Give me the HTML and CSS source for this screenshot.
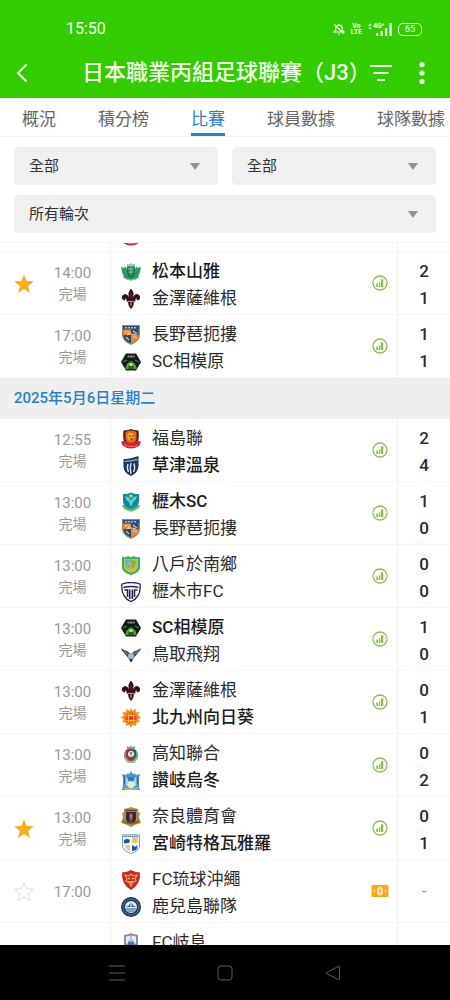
FILE: index.html
```html
<!DOCTYPE html>
<html lang="zh-Hant">
<head>
<meta charset="utf-8">
<meta name="viewport" content="width=device-width, initial-scale=1">
<title>日本職業丙組足球聯賽（J3）</title>
<link rel="stylesheet" href="styles.css">
</head>
<body>
<svg class="sprite" aria-hidden="true">
  <symbol id="star" viewBox="0 0 22 22"><path d="M11 1.2l2.6 6.7 7.1.4-5.5 4.6 1.8 7L11 16l-6 3.9 1.8-7L1.3 8.3l7.1-.4z"/></symbol>
  <symbol id="stats" viewBox="0 0 16 16">
    <circle cx="8" cy="8" r="7" fill="none" stroke="#8dc153" stroke-width="1.3"/>
    <path d="M4.300 8.500h1.900V12H4.300zM7 7.300h1.300V12H7zM9 4.200h2.300V12H9z" fill="#84c341"/>
  </symbol>
  <symbol id="ticket" viewBox="0 0 18 14">
    <path d="M.5 1h17v12H.5z" fill="#f5ab1c"/>
    <path d="M5.8 2.5v9M12.200 2.500v9" stroke="#e79a10" stroke-width=".8"/>
    <ellipse cx="9" cy="7" rx="3" ry="4.500" fill="#fff1cf"/>
    <path d="M9 3v8M7 7h4" stroke="#f5ab1c" stroke-width="1"/>
    <path d="M2 7l1.500-1.500V8.500zM16 7l-1.500-1.500V8.500z" fill="#fff1cf"/>
  </symbol>

  <symbol id="matsumoto" viewBox="0 0 20 20">
    <path d="M0 5l3.500 1L4 4l2 3 1 5h6l1-5 2-3 .5 2L20 5l-1 5-1 3-1 1 1 1-3 2-2 .5-3 1-3-1L5 17l-3-2 1-1-1-1-1-3z" fill="#2d9a63"/>
    <path d="M6 4h8v8q-1 3-4 4-3-1-4-4z" fill="#157b4b"/>
    <path d="M6 1.500l2 1 2-1.500 2 1.500 2-1v3H6z" fill="#9dbfae"/>
    <path d="M7 7h6M10 5v8M7.500 10h5" stroke="#8fcbab" stroke-width="1"/>
    <path d="M5 17q5 2 10 0" stroke="#99b8a5" fill="none"/>
  </symbol>
  <symbol id="kanazawa" viewBox="0 0 20 20">
    <path d="M10 0q3.200 3.500 1.800 8l.4 2q.3-4.300 3.800-4.500 3.200.5 2.800 3.500-.5 2.400-2.800 2 .8-1.700-.6-2-1.500.7-1.600 3.300l-1.300 1.200q0 3.500-2.500 6-2.500-2.500-2.500-6l-1.300-1.200Q6.100 9.700 4.600 9q-1.400.3-.6 2-2.300.4-2.800-2Q.8 6 4 5.500q3.500.2 3.800 4.500l.4-2Q6.800 3.500 10 0z" fill="#321018" stroke="#321018" stroke-width=".8"/>
    <path d="M6.500 12.300h7M10 13v4" stroke="#c08835" stroke-width="1.300"/>
    <path d="M10 3v6" stroke="#7a1f2a" stroke-width="1"/>
  </symbol>
  <symbol id="nagano" viewBox="0 0 20 20">
    <path d="M1 0h18v10q0 6-9 10-9-4-9-10z" fill="#a5825f"/>
    <path d="M2.500 4H10v6H2.500z" fill="#e9893c"/><path d="M10 4h7.500v6H10z" fill="#23518a"/>
    <path d="M2.500 10H10v8.500q-7-3-7.500-8.500z" fill="#1c4678"/><path d="M10 10h7.500q-.5 5.500-7.500 8.500z" fill="#ef8435"/>
    <path d="M2 1h16v3.500H2z" fill="#2d527e"/><path d="M4 2.800h12" stroke="#f1ead5" stroke-width="1" stroke-dasharray="2 1"/>
    <path d="M3.500 8q3-3 5 0l-2 1.500M12 6l4 3M5 12l3 3M12 12q3 0 4 1M6 10q4-2 9 0" fill="none" stroke="#f4c98a" stroke-width="1.100"/>
  </symbol>
  <symbol id="sagamihara" viewBox="0 0 20 20">
    <path d="M5 1.500h10l5 8.500-5 8.500H5L0 10z" fill="#101a12"/>
    <path d="M5.500 13L9 9h2l3.500 4 1 4h-11z" fill="#53b332"/><path d="M8.500 9.500h3L13 18H7z" fill="#16301a"/>
    <circle cx="10" cy="12.500" r="2" fill="#b7e375"/>
    <path d="M6.500 4.500h7" stroke="#87918a" stroke-width="1.800" stroke-dasharray="2 .5"/>
    <path d="M2 10l4-2M18 10l-4-2M4 16h12" stroke="#3d8a30" stroke-width="1.200"/>
  </symbol>
  <symbol id="fukushima" viewBox="0 0 20 20">
    <path d="M2.500 1.500L7 1l3-1 3 1 4.500.5q1 7.500-1 12.500H3.500q-2-5-1-12.500z" fill="#551a16"/>
    <path d="M4.500 3q5.500-3 11 0v7q-1 4-5.500 5-4.500-1-5.500-5z" fill="#e36a1d"/>
    <path d="M6.500 5q3-3 6 0l1 3-2 3-3 .5-2.500-3z" fill="#f4a72a"/><path d="M8 7h1.500M11 7h1.500M9 10h3" stroke="#56160d" stroke-width="1.200"/>
    <path d="M0 12.500l4-.5q6 4 12 0l4 .5-1.500 4Q10 22.500 1.500 16.500z" fill="#d51f32"/>
    <path d="M3.500 15.500q6.500 4 13 0" fill="none" stroke="#f6b9b0" stroke-width="1.100" stroke-dasharray="1 .7"/>
  </symbol>
  <symbol id="kusatsu" viewBox="0 0 20 20">
    <path d="M2.500 3Q8 3.500 17.500 0v10q-.5 7-7.500 10-7-3-7.500-9z" fill="#163663"/>
    <path d="M3.500 5.300q7-.300 13-1.800" stroke="#8ca2c2" fill="none" stroke-width="1.300"/>
    <path d="M7 8q-1.500 4 .5 8M10 7q-1.500 5 0 11M13 7.500q1.500 4-.5 8.500" stroke="#dce6ef" fill="none" stroke-width="1.400"/>
  </symbol>
  <symbol id="tochigi-sc" viewBox="0 0 20 20">
    <path d="M2 2q4 .5 8-1.500Q14 2.500 18 2v8q-1 6-8 8-7-2-8-8z" fill="#1684a5"/>
    <path d="M4 4q5 1 6 5 1-4 6-5-1 4-4 6l-2 5-2-5Q5 8 4 4z" fill="#62d2c6"/><circle cx="10" cy="4" r="1.800" fill="#a4dc6b"/>
    <path d="M2 13q1 4 8 5.500 7-1.500 8-5.500" fill="none" stroke="#65bd68" stroke-width="2.400"/>
  </symbol>
  <symbol id="hachinohe" viewBox="0 0 20 20">
    <path d="M1 2q4 1 6-1 3 2 6 0 2 2 6 1v11q-1 5-9 7-8-2-9-7z" fill="#38ad5c"/>
    <path d="M3 3.500q6 1 14 0V12q-1 4.500-7 6-6-1.500-7-6z" fill="#b9c640"/>
    <path d="M4 5h5l-2 4 3 1-3 4q-3-2-3-9z" fill="#53b9d1"/><path d="M10 5l5 1-1 5-3 2-1-4z" fill="#52b3a0"/>
    <path d="M8 7q3-2 4 1t-2 5l4-1" fill="none" stroke="#ee8a37" stroke-width="1.400"/>
  </symbol>
  <symbol id="tochigi-city" viewBox="0 0 20 20">
    <path d="M1 2q9-3 18 0 1.500 13-9 17.500Q-.5 15 1 2z" fill="#fff" stroke="#20265a" stroke-width="1.300"/>
    <path d="M2.500 5.500q7.500-2 15 0" fill="none" stroke="#20265a" stroke-width="1.600"/>
    <path d="M3.500 8h3v7M8.700 7.500V17M11.300 17V7.500M16.500 8h-3v7" fill="none" stroke="#20265a" stroke-width="1.600"/>
  </symbol>
  <symbol id="tottori" viewBox="0 0 20 20">
    <path d="M0 3q4 3 7 3.500L10 9l3-2.500Q16 6 20 3q-1 4-3.500 5.500L13.500 12 10 17l-3.500-5-3-3.500Q1 7 0 3z" fill="#344754"/>
    <path d="M2 6l5.500 3M18 6l-5.500 3" stroke="#7794a3" stroke-width="1"/>
    <circle cx="10" cy="11" r="3" fill="#a6bbc5"/><path d="M8 14.500l2 3 2-3" fill="#25343d"/>
  </symbol>
  <symbol id="kitakyushu" viewBox="0 0 20 20">
    <path d="M10 0l1.500 3L14.500.800l.5 3.400 3.500-.2-1.300 3.300L20 9.500l-2.600 1.700 1.600 3-3.500.3-.5 3.500-3.200-1.300L10 20l-1.800-3.300L5 18l-.5-3.500L1 14.200l1.600-3L0 9.500l2.800-2.200L1.500 4l3.500.2.500-3.400L8.500 3z" fill="#f5941d"/>
    <circle cx="10" cy="10" r="5.800" fill="#e8502a"/>
    <path d="M5.500 7.500h9M5.500 12.500h9M7.500 5.500v9M12.500 5.500v9M10 5v10" stroke="#ffc52c" stroke-width=".9"/><circle cx="10" cy="10" r="1.600" fill="#d92b24"/>
  </symbol>
  <symbol id="kochi" viewBox="0 0 20 20">
    <path d="M6 2l3 1 1-2.500L11 3l3-1v3H6z" fill="#9aa57f"/><circle cx="10" cy="11" r="7.200" fill="#8a8c7e"/>
    <path d="M5 6l5-1v12q-5-2-5-6z" fill="#b5293c"/><path d="M10 5l5 1v5q0 4-5 6z" fill="#1e7052"/>
    <circle cx="10" cy="10" r="3" fill="#edf0e8"/><path d="M8.500 9h3M10 8v4" stroke="#566b61"/>
    <path d="M4 14l3 4h6l3-4" fill="none" stroke="#b8ad85" stroke-width="2"/>
  </symbol>
  <symbol id="sanuki" viewBox="0 0 20 20">
    <path d="M1 3l4 1 2-2 1 1.500L10 0l2 3.500L13 2l2 2 4-1-1 4v8l1 4H1l1-4V7z" fill="#4795c9"/>
    <path d="M4.500 6h11v8L10 18l-5.500-4z" fill="#a5d4e8"/><path d="M6 6h8l-2 5H8z" fill="#3379ae"/>
    <circle cx="10" cy="13.500" r="3.500" fill="#e5e8cf"/><path d="M3 17q7 3 14 0" stroke="#c5ba7b" stroke-width="1.700" fill="none"/>
    <path d="M3.500 6v7M16.500 6v7" stroke="#256ba3" stroke-width="1.200"/>
  </symbol>
  <symbol id="nara" viewBox="0 0 20 20">
    <path d="M3 2l4-1 3-1 3 1 4 1v3l2 1-1 4 2 6-5 1.500L10 20l-5-2.500L0 16l2-6-1-4 2-1z" fill="#b18a43"/>
    <path d="M5 5h10v7q-1 4-5 5-4-1-5-5z" fill="#34264e"/><path d="M8.500 6h3v8l-1.500 1-1.500-1z" fill="#8c3f40"/>
    <path d="M4.500 3.500h11" stroke="#654425" stroke-width="1.400"/><path d="M2 14q8 5 16 0" stroke="#80602d" stroke-width="1.500" fill="none"/>
    <path d="M10 7v5M8.500 9h3" stroke="#d0a85f" stroke-width=".8"/>
  </symbol>
  <symbol id="miyazaki" viewBox="0 0 20 20">
    <path d="M1.500.800h17v12Q17 17.500 10 19.500 3 17.500 1.500 12.800z" fill="#eef2f4" stroke="#87a0bf"/>
    <path d="M10.500 3H17v6h-6.500z" fill="#f4cf68"/><path d="M3 6q3-2 6 0l-1 3-5 1z" fill="#20539a"/>
    <path d="M11 11l3 2 2.500-2-1 5-4.500 1z" fill="#215695"/><path d="M4 11h5v6q-4-2-5-6z" fill="#f2c490"/>
    <path d="M2.500 2.300h15" stroke="#497cb8" stroke-width="1.300" stroke-dasharray="1.500 .6"/>
    <path d="M10 3v15M2 10h16" stroke="#fff" stroke-width="1"/><circle cx="13.500" cy="6" r="1.500" fill="#f0b556"/>
  </symbol>
  <symbol id="ryukyu" viewBox="0 0 20 20">
    <path d="M1 2.500Q6 2 10 0q4 2 9 2.500Q20 14 10 20 0 14 1 2.500z" fill="#c92c27"/>
    <path d="M4 5l4 1 2-2 2 2 4-1-2 4 1 2-3 1-2 4-2-4-3-1 1-2z" fill="none" stroke="#f6aa5b" stroke-width="1.100"/>
    <path d="M7 8l2 1M13 8l-2 1M8 12h4" stroke="#f6c07c" stroke-width="1.300"/>
  </symbol>
  <symbol id="kagoshima" viewBox="0 0 20 20">
    <circle cx="10" cy="10" r="10" fill="#17385c"/><circle cx="10" cy="10" r="7.800" fill="none" stroke="#6f8aa6" stroke-width="1.200" stroke-dasharray="1.200 .8"/>
    <circle cx="10" cy="10" r="6" fill="#dce7ef"/><path d="M4.500 10l3-1 2.500-4 2.500 4 3 1z" fill="#315f8e"/>
    <path d="M4.500 12h11M6 14h8" stroke="#315f8e" stroke-width="1.200"/><path d="M10 5v5" stroke="#fff"/>
  </symbol>
  <symbol id="gifu" viewBox="0 0 20 20">
    <path d="M3 2l5-1 2-1 2 1 5 1v12l-7 5-7-5z" fill="#8290a4"/><path d="M5 3.500l4.500-1v8H5zM10.500 2.500l4.500 1v7h-4.500z" fill="#eee9e8"/>
    <path d="M7 9q3-4 6 0v6H7z" fill="#4774ad"/><circle cx="10" cy="7" r="2" fill="#b1c9e0"/>
    <path d="M0 14l5 1q5 4 10 0l5-1-2 4H2z" fill="#688c7d"/>
  </symbol>
</svg>

<div class="screen">
  <header class="header">
    <div class="status">
      <time class="status-time">15:50</time>
      <div class="status-icons">
        <svg class="bell" viewBox="0 0 12 12" aria-label="靜音"><path d="M1 9h10L9.300 7.500V5Q9 2.500 6 2.200 3 2.500 2.700 5v2.500zM5 11h2M6 1v1M1.500 1.500l9 9" fill="none" stroke="currentColor" stroke-width="1.200"/></svg>
        <span class="volte"><span>Vo</span><span>LTE</span></span>
        <span class="signal"><svg class="arrows" viewBox="0 0 4 8" aria-hidden="true"><path d="M0 3l2-2.500L4 3zM0 5l2 2.500L4 5z" fill="currentColor"/></svg><span class="net">4G⁺</span>
          <svg class="bars" viewBox="0 0 16 13" aria-hidden="true"><path d="M0 10h2.200v3H0zM4.500 8h2.200v5H4.500zM9 5h2.200v8H9zM13.500 0h2.200v13h-2.200z" fill="currentColor"/></svg></span>
        <span class="battery">65</span>
      </div>
    </div>
    <div class="bar">
      <button class="icon-button back" aria-label="返回"><svg viewBox="0 0 12 20"><path d="M10.500 1.500L2 10l8.500 8.500" fill="none" stroke="currentColor" stroke-width="2"/></svg></button>
      <h1 class="title">日本職業丙組足球聯賽（J3）</h1>
      <button class="icon-button filter" aria-label="篩選"><svg viewBox="0 0 22 18"><path d="M0 2h22M3.500 9h15M7 16h8" stroke="currentColor" stroke-width="2"/></svg></button>
      <button class="icon-button more" aria-label="更多"><svg viewBox="0 0 6 24"><circle cx="3" cy="3.500" r="2.600"/><circle cx="3" cy="12" r="2.600"/><circle cx="3" cy="20.500" r="2.600"/></svg></button>
    </div>
  </header>

  <nav class="tabs" aria-label="聯賽">
    <a class="tab" href="#overview">概況</a>
    <a class="tab" href="#table">積分榜</a>
    <a class="tab active" href="#matches" aria-current="page">比賽</a>
    <a class="tab" href="#players">球員數據</a>
    <a class="tab" href="#teams">球隊數據</a>
  </nav>

  <form class="filters">
    <div class="field"><select aria-label="階段"><option>全部</option></select></div>
    <div class="field"><select aria-label="球隊"><option>全部</option></select></div>
    <div class="field wide"><select aria-label="輪次"><option>所有輪次</option></select></div>
  </form>

  <main class="list" id="matches">
    <div class="match scrolled">
      <div class="when"></div>
      <div class="teams"><div class="team"></div><div class="team"><svg class="badge"><use href="#fukushima"/></svg></div></div>
      <div class="info"></div><div class="scores"></div>
    </div>
    <article class="match">
      <div class="when"><button class="star on" aria-label="取消收藏"><svg><use href="#star"/></svg></button><div class="time"><time>14:00</time><span>完場</span></div></div>
      <div class="teams"><div class="team win"><svg class="badge"><use href="#matsumoto"/></svg><span>松本山雅</span></div><div class="team"><svg class="badge"><use href="#kanazawa"/></svg><span>金澤薩維根</span></div></div>
      <div class="info"><svg class="stats"><use href="#stats"/></svg></div><div class="scores"><span>2</span><span>1</span></div>
    </article>
    <article class="match">
      <div class="when"><div class="time"><time>17:00</time><span>完場</span></div></div>
      <div class="teams"><div class="team"><svg class="badge"><use href="#nagano"/></svg><span>長野琶扼摟</span></div><div class="team"><svg class="badge"><use href="#sagamihara"/></svg><span>SC相模原</span></div></div>
      <div class="info"><svg class="stats"><use href="#stats"/></svg></div><div class="scores"><span>1</span><span>1</span></div>
    </article>
    <h2 class="date">2025年5月6日星期二</h2>
    <article class="match">
      <div class="when"><div class="time"><time>12:55</time><span>完場</span></div></div>
      <div class="teams"><div class="team"><svg class="badge"><use href="#fukushima"/></svg><span>福島聯</span></div><div class="team win"><svg class="badge"><use href="#kusatsu"/></svg><span>草津溫泉</span></div></div>
      <div class="info"><svg class="stats"><use href="#stats"/></svg></div><div class="scores"><span>2</span><span>4</span></div>
    </article>
    <article class="match">
      <div class="when"><div class="time"><time>13:00</time><span>完場</span></div></div>
      <div class="teams"><div class="team win"><svg class="badge"><use href="#tochigi-sc"/></svg><span>櫪木SC</span></div><div class="team"><svg class="badge"><use href="#nagano"/></svg><span>長野琶扼摟</span></div></div>
      <div class="info"><svg class="stats"><use href="#stats"/></svg></div><div class="scores"><span>1</span><span>0</span></div>
    </article>
    <article class="match">
      <div class="when"><div class="time"><time>13:00</time><span>完場</span></div></div>
      <div class="teams"><div class="team"><svg class="badge"><use href="#hachinohe"/></svg><span>八戶於南鄉</span></div><div class="team"><svg class="badge"><use href="#tochigi-city"/></svg><span>櫪木市FC</span></div></div>
      <div class="info"><svg class="stats"><use href="#stats"/></svg></div><div class="scores"><span>0</span><span>0</span></div>
    </article>
    <article class="match">
      <div class="when"><div class="time"><time>13:00</time><span>完場</span></div></div>
      <div class="teams"><div class="team win"><svg class="badge"><use href="#sagamihara"/></svg><span>SC相模原</span></div><div class="team"><svg class="badge"><use href="#tottori"/></svg><span>鳥取飛翔</span></div></div>
      <div class="info"><svg class="stats"><use href="#stats"/></svg></div><div class="scores"><span>1</span><span>0</span></div>
    </article>
    <article class="match">
      <div class="when"><div class="time"><time>13:00</time><span>完場</span></div></div>
      <div class="teams"><div class="team"><svg class="badge"><use href="#kanazawa"/></svg><span>金澤薩維根</span></div><div class="team win"><svg class="badge"><use href="#kitakyushu"/></svg><span>北九州向日葵</span></div></div>
      <div class="info"><svg class="stats"><use href="#stats"/></svg></div><div class="scores"><span>0</span><span>1</span></div>
    </article>
    <article class="match">
      <div class="when"><div class="time"><time>13:00</time><span>完場</span></div></div>
      <div class="teams"><div class="team"><svg class="badge"><use href="#kochi"/></svg><span>高知聯合</span></div><div class="team win"><svg class="badge"><use href="#sanuki"/></svg><span>讚岐烏冬</span></div></div>
      <div class="info"><svg class="stats"><use href="#stats"/></svg></div><div class="scores"><span>0</span><span>2</span></div>
    </article>
    <article class="match">
      <div class="when"><button class="star on" aria-label="取消收藏"><svg><use href="#star"/></svg></button><div class="time"><time>13:00</time><span>完場</span></div></div>
      <div class="teams"><div class="team"><svg class="badge"><use href="#nara"/></svg><span>奈良體育會</span></div><div class="team win"><svg class="badge"><use href="#miyazaki"/></svg><span>宮崎特格瓦雅羅</span></div></div>
      <div class="info"><svg class="stats"><use href="#stats"/></svg></div><div class="scores"><span>0</span><span>1</span></div>
    </article>
    <article class="match">
      <div class="when"><button class="star" aria-label="收藏"><svg><use href="#star"/></svg></button><div class="time"><time>17:00</time></div></div>
      <div class="teams"><div class="team"><svg class="badge"><use href="#ryukyu"/></svg><span>FC琉球沖繩</span></div><div class="team"><svg class="badge"><use href="#kagoshima"/></svg><span>鹿兒島聯隊</span></div></div>
      <div class="info"><svg class="ticket"><use href="#ticket"/></svg></div><div class="scores pending"><span>-</span></div>
    </article>
    <article class="match">
      <div class="when"><button class="star" aria-label="收藏"><svg><use href="#star"/></svg></button></div>
      <div class="teams"><div class="team"><svg class="badge"><use href="#gifu"/></svg><span>FC岐阜</span></div></div>
      <div class="info"></div><div class="scores"></div>
    </article>
  </main>

  <footer class="system">
    <button aria-label="最近"><svg viewBox="0 0 16 16"><path d="M0 1h16M0 8h16M0 15h16"/></svg></button>
    <button aria-label="主頁"><svg viewBox="0 0 16 16"><rect x="1" y="1" width="14" height="14" rx="3"/></svg></button>
    <button aria-label="返回"><svg viewBox="0 0 16 16"><path d="M14.500 2v12q0 1-1 .6L1.800 8.700q-1-.7 0-1.400L13.500 1.400q1-.4 1 .6z"/></svg></button>
  </footer>
</div>
</body>
</html>
```
FILE: styles.css
```css
* { box-sizing: border-box; }
body {
  margin: 0;
  background: #fff;
  color: #2b2b2b;
  font-family: Roboto, "Noto Sans CJK TC", sans-serif;
}
button {
  display: grid;
  place-items: center;
  padding: 0;
  border: 0;
  background: none;
  color: inherit;
}
svg { display: block; }
.sprite { display: none; }

.screen {
  display: flex;
  flex-direction: column;
  height: 100vh;
  overflow: hidden;
}

/* Header */
.header {
  flex: none;
  padding-top: 18px;
  background: #33cc00;
  color: #f0ffea;
}
.status {
  display: flex;
  justify-content: space-between;
  align-items: center;
  height: 22px;
  padding: 0 28px 0 66px;
}
.status-time { font-size: 16px; line-height: 22px; }
.status-icons { display: flex; align-items: center; gap: 6px; }
.bell { width: 12px; height: 12px; }
.volte {
  display: grid;
  justify-items: center;
  font-size: 7px;
  font-weight: 700;
  line-height: 6px;
}
.signal { display: grid; grid-template-columns: 4px 20px; align-items: start; }
.arrows { width: 4px; height: 7px; }
.net { font-size: 7px; font-weight: 700; line-height: 7px; grid-area: 1 / 2; padding-left: 1px; }
.bars { width: 16px; height: 13px; grid-area: 1 / 2; justify-self: end; }
.battery {
  width: 24px;
  height: 13px;
  border: 1px solid currentColor;
  border-radius: 5px;
  font-size: 9px;
  line-height: 11px;
  text-align: center;
}
.bar {
  display: flex;
  align-items: center;
  height: 50px;
  margin-top: 8px;
  padding: 0 17px 0 15px;
}
.icon-button { flex: none; height: 40px; }
.back { width: 14px; }
.back svg { width: 12px; height: 20px; }
.filter { width: 24px; }
.filter svg { width: 22px; height: 18px; }
.more { width: 22px; margin-left: 18px; }
.more svg { width: 6px; height: 24px; fill: currentColor; }
.title {
  flex: 1;
  min-width: 0;
  margin: 0;
  padding-left: 53px;
  font-size: 22px;
  font-weight: 500;
  line-height: 32px;
  white-space: nowrap;
}

/* Tabs */
.tabs {
  display: flex;
  flex: none;
  gap: 42px;
  height: 39px;
  padding-left: 22px;
  border-bottom: 1px solid #f3f3f3;
  overflow: hidden;
}
.tab {
  flex: none;
  border-bottom: 3px solid transparent;
  color: #666;
  font-size: 17px;
  line-height: 42px;
  text-decoration: none;
  white-space: nowrap;
}
.tab.active { border-color: #2a80c8; color: #2a80c8; }

/* Filters */
.filters {
  display: grid;
  flex: none;
  grid-template-columns: 1fr 1fr;
  gap: 10px 14px;
  padding: 10px 14px 9px;
}
.field { display: grid; align-items: center; }
.field.wide { grid-column: 1 / -1; }
.field select {
  grid-area: 1 / 1;
  width: 100%;
  height: 38px;
  padding: 0 36px 0 15px;
  border: 0;
  border-radius: 5px;
  background: #f0f0f0;
  color: #333;
  font: 15px Roboto, "Noto Sans CJK TC", sans-serif;
  appearance: none;
}
.field::after {
  content: "";
  grid-area: 1 / 1;
  justify-self: end;
  margin-right: 18px;
  border: 5px solid transparent;
  border-top: 7px solid #929292;
  border-bottom: 0;
  pointer-events: none;
}

/* Match list */
.list {
  flex: 1;
  min-height: 0;
  overflow: hidden;
  border-top: 1px solid #f5f5f5;
}
.match {
  display: grid;
  grid-template-columns: 111px 1fr 34px 53px;
  height: 63px;
  border-bottom: 1px solid #f5f5f5;
}
.match.scrolled { margin-top: -54px; }
.when {
  display: grid;
  grid-template-columns: 48px 49px;
  align-items: center;
  padding-top: 2px;
  border-right: 1px solid #f3f3f3;
}
.star svg {
  width: 22px;
  height: 22px;
  fill: #fff;
  stroke: #dedede;
  stroke-width: 1px;
}
.star.on svg { fill: #fbae1c; stroke: none; }
.time {
  display: grid;
  grid-column: 2;
  justify-items: center;
  color: #999;
  font-size: 14px;
  line-height: 21px;
}
.time time { font-size: 15px; }
.teams { padding: 6px 0 0 10px; }
.team {
  display: flex;
  align-items: center;
  gap: 11px;
  height: 27px;
  font-size: 17px;
  line-height: 27px;
  white-space: nowrap;
}
.win { font-weight: 500; color: #1c1c1c; }
.badge { flex: none; width: 20px; height: 20px; }
.info { display: grid; place-items: center; }
.stats { width: 16px; height: 16px; }
.ticket { width: 18px; height: 14px; }
.scores {
  display: grid;
  align-content: start;
  justify-items: center;
  padding-top: 6px;
  border-left: 1px solid #f3f3f3;
  font-size: 17px;
  font-weight: 500;
  line-height: 27px;
}
.scores.pending { align-content: center; padding-top: 0; color: #999; font-weight: 400; }
.date {
  margin: 0;
  padding: 0 14px;
  background: #efefef;
  color: #2a80c8;
  font-size: 15px;
  font-weight: 500;
  line-height: 41px;
}

/* System navigation */
.system {
  display: grid;
  flex: none;
  grid-template-columns: repeat(3, 1fr);
  height: 55px;
  padding: 0 14%;
  background: #000;
}
.system svg { width: 16px; height: 16px; fill: none; stroke: #5c5c5c; stroke-width: 1px; }
```
